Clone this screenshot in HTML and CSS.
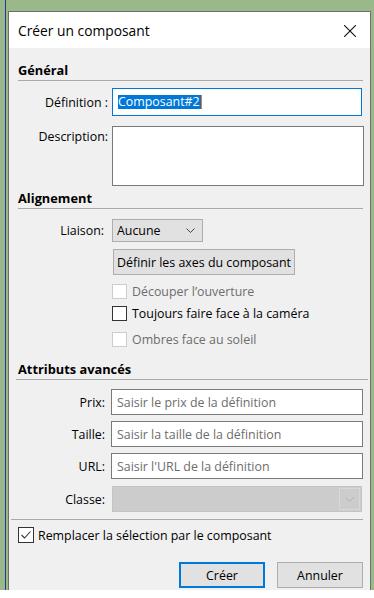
FILE: index.html
```html
<!DOCTYPE html>
<html lang="fr">
<head>
<meta charset="utf-8">
<title>Créer un composant</title>
<link rel="stylesheet" href="styles.css">
</head>
<body>
<div class="desk">
  <div class="dialog">
    <div class="titlebar">
      <span class="title">Créer un composant</span>
      <svg class="close" width="12" height="12" viewBox="0 0 12 12"><path d="M0 0L12 12M12 0L0 12" stroke="#111" stroke-width="1.1" fill="none"/></svg>
    </div>
    <div class="content">
      <div class="section-head">Général</div>
      <div class="row row-def">
        <span class="lbl">Définition :</span>
        <div class="input input-focus"><span class="sel">Composant#2</span></div>
      </div>
      <div class="row row-desc">
        <span class="lbl lbl-top">Description:</span>
        <div class="textarea"></div>
      </div>
      <div class="section-head head-align">Alignement</div>
      <div class="row row-liaison">
        <span class="lbl lbl-liaison">Liaison:</span>
        <div class="select"><span>Aucune</span><svg class="chev" width="9" height="5" viewBox="0 0 9 5"><path d="M0.5 0.5L4.5 4.5L8.5 0.5" stroke="#444" stroke-width="1" fill="none"/></svg></div>
      </div>
      <div class="indent">
        <div class="btn btn-axes">Définir les axes du composant</div>
        <div class="check disabled cb1"><span class="box"></span><span>Découper l’ouverture</span></div>
        <div class="check cb2"><span class="box"></span><span>Toujours faire face à la caméra</span></div>
        <div class="check disabled cb3"><span class="box"></span><span>Ombres face au soleil</span></div>
      </div>
      <div class="section-head head-adv">Attributs avancés</div>
      <div class="adv">
        <span class="lbl">Prix:</span><div class="input ph">Saisir le prix de la définition</div>
        <span class="lbl">Taille:</span><div class="input ph">Saisir la taille de la définition</div>
        <span class="lbl">URL:</span><div class="input ph">Saisir l'URL de la définition</div>
        <span class="lbl lbl-classe">Classe:</span><div class="select-dis"><span class="dis-btn"><svg width="9" height="5" viewBox="0 0 9 5"><path d="M0.5 0.5L4.5 4.5L8.5 0.5" stroke="#b4b4b4" stroke-width="1" fill="none"/></svg></span></div>
      </div>
      <div class="sep"></div>
      <div class="check cb-main"><span class="box box-main"><svg width="14" height="14" viewBox="0 0 14 14"><path d="M2.5 7L5.5 10L11.5 3.5" stroke="#333" stroke-width="1.1" fill="none"/></svg></span><span>Remplacer la sélection par le composant</span></div>
      <div class="actions">
        <div class="btn btn-primary">Créer</div>
        <div class="btn btn-cancel">Annuler</div>
      </div>
    </div>
  </div>
</div>
</body>
</html>
```

FILE: styles.css
```css
* { box-sizing: border-box; }
html, body { margin: 0; padding: 0; background: #ffffff; }
body {
  font-family: "Open Sans", "Noto Sans", sans-serif;
  font-size: 12.4px;
  color: #000;
}
.desk {
  height: 590px;
  overflow: hidden;
  padding: 11px 0 0 8px;
  background: linear-gradient(to right, #99b98b 0, #99b98b 5px, #2c3590 5px, #2c3590 6px, #99b98b 6px, #99b98b 100%);
}
.dialog {
  width: 363px;
  height: 620px;
  border: 1px solid #6f6f6f;
  background: #f0f0f0;
}
.titlebar {
  height: 36px;
  background: #ffffff;
  display: flex;
  align-items: center;
  justify-content: space-between;
  padding: 0 14px 0 9px;
}
.title { font-size: 13.8px; }
.close { display: block; margin-top: 1px; }
.content { padding-top: 1px; }
.section-head {
  margin: 12px 7px 0 9px;
  height: 20px;
  line-height: 19px;
  border-bottom: 1px solid #a9a9a9;
  font-weight: bold;
  font-size: 12.8px;
}
.row {
  display: grid;
  grid-template-columns: 99px auto;
  column-gap: 4px;
  align-items: center;
}
.lbl { text-align: right; white-space: nowrap; }
.row-def { margin-top: 7px; }
.input {
  height: 26px;
  width: 252px;
  border: 1px solid #7a7a7a;
  background: #fff;
  display: flex;
  align-items: center;
  padding-left: 4px;
  white-space: nowrap;
}
.input-focus {
  height: 28px;
  width: 250px;
  border-color: #0078d7;
  padding-left: 5px;
}
.sel {
  background: #0078d7;
  color: #fff;
  line-height: 14px;
  padding: 0 1px 0 0;
  border-right: 1px solid #e07a2a;
}
.row-desc { margin-top: 10px; align-items: start; }
.lbl-top { padding-top: 2px; }
.textarea {
  width: 252px;
  height: 60px;
  border: 1px solid #7a7a7a;
  background: #fff;
}
.head-align { margin-top: 3px; }
.row-liaison { margin-top: 10px; }
.lbl-liaison { padding-right: 4px; }
.select {
  width: 91px;
  height: 23px;
  background: #e1e1e1;
  border: 1px solid #adadad;
  display: flex;
  align-items: center;
  justify-content: space-between;
  padding: 0 7px 0 4px;
}
.chev { display: block; }
.indent { margin-left: 103px; }
.btn {
  height: 26px;
  background: #e1e1e1;
  border: 1px solid #adadad;
  display: flex;
  align-items: center;
  justify-content: center;
  white-space: nowrap;
}
.btn-axes { margin: 7px 0 0 1px; width: 182px; }
.check {
  display: flex;
  align-items: center;
  height: 15px;
  white-space: nowrap;
}
.box {
  width: 15px;
  height: 15px;
  border: 1px solid #333333;
  background: #ffffff;
  margin-right: 5px;
  flex: none;
}
.disabled { color: #6d6d6d; }
.disabled .box { border-color: #cccccc; }
.cb1 { margin-top: 9px; }
.cb2 { margin-top: 7px; }
.cb3 { margin-top: 11px; }
.head-adv { margin: 13px 2px 0 7px; padding-left: 2px; }
.adv {
  margin-top: 9px;
  display: grid;
  grid-template-columns: 96px auto;
  column-gap: 6px;
  row-gap: 6px;
  align-items: center;
}
.ph { color: #6d6d6d; padding-left: 5px; }
.lbl-classe { margin-top: 1px; }
.select-dis {
  margin: 1px 0 0 1px;
  width: 250px;
  height: 26px;
  background: #cccccc;
  border: 1px solid #c4c4c4;
  display: flex;
  justify-content: flex-end;
  padding: 1px;
}
.dis-btn {
  width: 21px;
  height: 22px;
  border: 1px solid #d8d8d8;
  display: flex;
  align-items: center;
  justify-content: center;
}
.sep {
  margin: 7px 0 0 2px;
  width: 352px;
  height: 1px;
  background: #a9a9a9;
}
.cb-main { margin: 7px 0 0 9px; height: 16px; }
.box-main {
  width: 16px;
  height: 16px;
  margin-right: 4px;
  display: flex;
  align-items: center;
  justify-content: center;
}
.box-main svg { display: block; }
.actions {
  margin-top: 19px;
  display: flex;
  justify-content: flex-end;
  column-gap: 12px;
  padding-right: 7px;
}
.btn-primary, .btn-cancel { width: 86px; }
.btn-primary { border: 2px solid #0078d7; }
```
